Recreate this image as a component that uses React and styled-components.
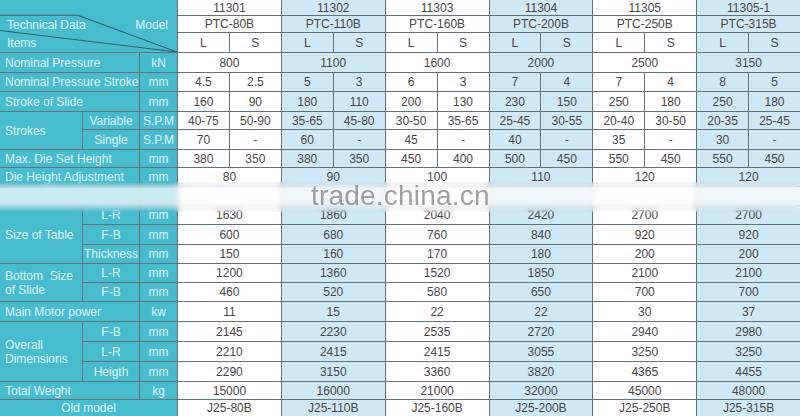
import React from 'react'
import styled, { createGlobalStyle } from 'styled-components'

const models = [
  { no: '11301', name: 'PTC-80B', old: 'J25-80B' },
  { no: '11302', name: 'PTC-110B', old: 'J25-110B' },
  { no: '11303', name: 'PTC-160B', old: 'J25-160B' },
  { no: '11304', name: 'PTC-200B', old: 'J25-200B' },
  { no: '11305', name: 'PTC-250B', old: 'J25-250B' },
  { no: '11305-1', name: 'PTC-315B', old: 'J25-315B' },
]

// row number in the grid -> one value per model, or an [L, S] pair
const dataRows = [
  [4, ['800', '1100', '1600', '2000', '2500', '3150']],
  [5, [['4.5', '2.5'], ['5', '3'], ['6', '3'], ['7', '4'], ['7', '4'], ['8', '5']]],
  [6, [['160', '90'], ['180', '110'], ['200', '130'], ['230', '150'], ['250', '180'], ['250', '180']]],
  [7, [['40-75', '50-90'], ['35-65', '45-80'], ['30-50', '35-65'], ['25-45', '30-55'], ['20-40', '30-50'], ['20-35', '25-45']]],
  [8, [['70', '-'], ['60', '-'], ['45', '-'], ['40', '-'], ['35', '-'], ['30', '-']]],
  [9, [['380', '350'], ['380', '350'], ['450', '400'], ['500', '450'], ['550', '450'], ['550', '450']]],
  [10, ['80', '90', '100', '110', '120', '120']],
  [11, ['', '', '', '', '', '']],
  [12, ['1630', '1860', '2040', '2420', '2700', '2700']],
  [13, ['600', '680', '760', '840', '920', '920']],
  [14, ['150', '160', '170', '180', '200', '200']],
  [15, ['1200', '1360', '1520', '1850', '2100', '2100']],
  [16, ['460', '520', '580', '650', '700', '700']],
  [17, ['11', '15', '22', '22', '30', '37']],
  [18, ['2145', '2230', '2535', '2720', '2940', '2980']],
  [19, ['2210', '2415', '2415', '3055', '3250', '3250']],
  [20, ['2290', '3150', '3360', '3820', '4365', '4455']],
  [21, ['15000', '16000', '21000', '32000', '45000', '48000']],
]

// label, sub label, unit per row of the left header
const leftCells = [
  { row: '4', col: '1 / 3', text: 'Nominal Pressure' },
  { row: '4', col: '3', text: 'kN', center: true },
  { row: '5', col: '1 / 3', text: 'Nominal Pressure Stroke' },
  { row: '5', col: '3', text: 'mm', center: true },
  { row: '6', col: '1 / 3', text: 'Stroke of Slide' },
  { row: '6', col: '3', text: 'mm', center: true },
  { row: '7 / span 2', col: '1', text: 'Strokes' },
  { row: '7', col: '2', text: 'Variable', center: true },
  { row: '7', col: '3', text: 'S.P.M', center: true },
  { row: '8', col: '2', text: 'Single', center: true },
  { row: '8', col: '3', text: 'S.P.M', center: true },
  { row: '9', col: '1 / 3', text: 'Max. Die Set Height' },
  { row: '9', col: '3', text: 'mm', center: true },
  { row: '10', col: '1 / 3', text: 'Die Height Adjustment' },
  { row: '10', col: '3', text: 'mm', center: true },
  { row: '11', col: '1 / 3', text: '' },
  { row: '11', col: '3', text: '', center: true },
  { row: '12 / span 3', col: '1', text: 'Size of Table' },
  { row: '12', col: '2', text: 'L-R', center: true },
  { row: '12', col: '3', text: 'mm', center: true },
  { row: '13', col: '2', text: 'F-B', center: true },
  { row: '13', col: '3', text: 'mm', center: true },
  { row: '14', col: '2', text: 'Thickness', center: true },
  { row: '14', col: '3', text: 'mm', center: true },
  { row: '15 / span 2', col: '1', text: ['Bottom  Size', 'of Slide'] },
  { row: '15', col: '2', text: 'L-R', center: true },
  { row: '15', col: '3', text: 'mm', center: true },
  { row: '16', col: '2', text: 'F-B', center: true },
  { row: '16', col: '3', text: 'mm', center: true },
  { row: '17', col: '1 / 3', text: 'Main Motor power' },
  { row: '17', col: '3', text: 'kw', center: true },
  { row: '18 / span 3', col: '1', text: ['Overall', 'Dimensions'] },
  { row: '18', col: '2', text: 'F-B', center: true },
  { row: '18', col: '3', text: 'mm', center: true },
  { row: '19', col: '2', text: 'L-R', center: true },
  { row: '19', col: '3', text: 'mm', center: true },
  { row: '20', col: '2', text: 'Heigth', center: true },
  { row: '20', col: '3', text: 'mm', center: true },
  { row: '21', col: '1 / 3', text: 'Total Weight' },
  { row: '21', col: '3', text: 'kg', center: true },
  { row: '22', col: '1 / 4', text: 'Old model', center: true },
]

function App() {
  return (
    <>
      <GlobalStyle />
      <Sheet>
        <Grid>
          <Corner>
            <CornerLines viewBox="0 0 175 53" preserveAspectRatio="none">
              <line x1="0" y1="15.5" x2="77" y2="15.5" />
              <line x1="77" y1="15.5" x2="175" y2="53" />
              <line x1="0" y1="31" x2="175" y2="53" />
            </CornerLines>
            <CornerRow />
            <CornerRow $split>
              <span>Technical Data</span>
              <span>Model</span>
            </CornerRow>
            <CornerRow>
              <span>Items</span>
            </CornerRow>
          </Corner>

          {models.map((m, i) => (
            <React.Fragment key={m.no}>
              <Cell $tone={tone(i)} $row="1" $col={`${4 + i * 2} / span 2`}>{m.no}</Cell>
              <Cell $tone={tone(i)} $row="2" $col={`${4 + i * 2} / span 2`}>{m.name}</Cell>
              <Cell $tone={tone(i)} $row="3" $col={`${4 + i * 2}`}>L</Cell>
              <Cell $tone={tone(i)} $row="3" $col={`${5 + i * 2}`}>S</Cell>
              <Cell $tone={tone(i)} $row="22" $col={`${4 + i * 2} / span 2`}>{m.old}</Cell>
            </React.Fragment>
          ))}

          {leftCells.map((c, i) => (
            <Cell key={i} $tone="teal" $row={c.row} $col={c.col} $left={!c.center}>
              {Array.isArray(c.text) ? (
                <Lines>
                  {c.text.map((t) => (
                    <span key={t}>{t}</span>
                  ))}
                </Lines>
              ) : (
                c.text
              )}
            </Cell>
          ))}

          {dataRows.map(([row, values]) =>
            values.map((v, i) =>
              Array.isArray(v) ? (
                <React.Fragment key={`${row}-${i}`}>
                  <Cell $tone={tone(i)} $row={`${row}`} $col={`${4 + i * 2}`}>{v[0]}</Cell>
                  <Cell $tone={tone(i)} $row={`${row}`} $col={`${5 + i * 2}`}>{v[1]}</Cell>
                </React.Fragment>
              ) : (
                <Cell key={`${row}-${i}`} $tone={tone(i)} $row={`${row}`} $col={`${4 + i * 2} / span 2`}>
                  {v}
                </Cell>
              )
            )
          )}
        </Grid>
        <Band />
        <Watermark>trade.china.cn</Watermark>
      </Sheet>
    </>
  )
}

const tone = (i) => (i % 2 === 0 ? 'white' : 'blue')

const colors = {
  teal: '#48bccf',
  white: '#ffffff',
  blue: '#cfe8f6',
}

const GlobalStyle = createGlobalStyle`
  body {
    margin: 0;
    background: #ffffff;
    font-family: "Liberation Sans", Arial, sans-serif;
  }
`

const Sheet = styled.div`
  position: relative;
  width: 800px;
  height: 416px;
  overflow: hidden;
`

const Grid = styled.div`
  display: grid;
  grid-template-columns: 82px 56px 37px repeat(12, 1fr);
  grid-template-rows: 15px 16px 19px 19px 18px 19px 17px 19px 17px 18px 18px 18px 19px 18px 18px 18px 19px 19px 19px 19px 17px 16px;
  gap: 1px;
  width: 800px;
  background: #637277;
`

const Cell = styled.div`
  grid-row: ${(p) => p.$row};
  grid-column: ${(p) => p.$col};
  display: flex;
  align-items: center;
  justify-content: ${(p) => (p.$left ? 'flex-start' : 'center')};
  padding-left: ${(p) => (p.$left ? '5px' : '0')};
  background: ${(p) => colors[p.$tone]};
  color: ${(p) => (p.$tone === 'teal' ? '#def3f7' : '#464646')};
  font-size: 12px;
  line-height: 1;
  white-space: pre;
  overflow: hidden;
`

const Lines = styled.div`
  display: flex;
  flex-direction: column;
  gap: 2px;
  line-height: 12px;
`

const Corner = styled.div`
  grid-row: 1 / span 3;
  grid-column: 1 / span 3;
  position: relative;
  display: grid;
  grid-template-rows: 16px 17px 1fr;
  background: ${colors.teal};
  color: #def3f7;
  font-size: 12px;
`

const CornerRow = styled.div`
  display: flex;
  align-items: center;
  justify-content: ${(p) => (p.$split ? 'space-between' : 'flex-start')};
  padding: 0 9px 0 7px;
`

const CornerLines = styled.svg`
  position: absolute;
  inset: 0;
  width: 100%;
  height: 100%;

  line {
    stroke: #2f5d66;
    stroke-width: 1;
  }
`

const Band = styled.div`
  position: absolute;
  left: 0;
  right: 0;
  top: 182px;
  height: 30px;
  background: linear-gradient(
    to bottom,
    rgba(255, 255, 255, 0) 0%,
    rgba(255, 255, 255, 0.7) 22%,
    rgba(255, 255, 255, 0.7) 72%,
    rgba(255, 255, 255, 0) 100%
  );
  backdrop-filter: blur(3px);
`

const Watermark = styled.div`
  position: absolute;
  left: 311px;
  top: 180px;
  font-family: "Liberation Sans", Arial, sans-serif;
  font-size: 28px;
  color: rgba(120, 120, 120, 0.7);
  letter-spacing: 0.2px;
`

export default App
